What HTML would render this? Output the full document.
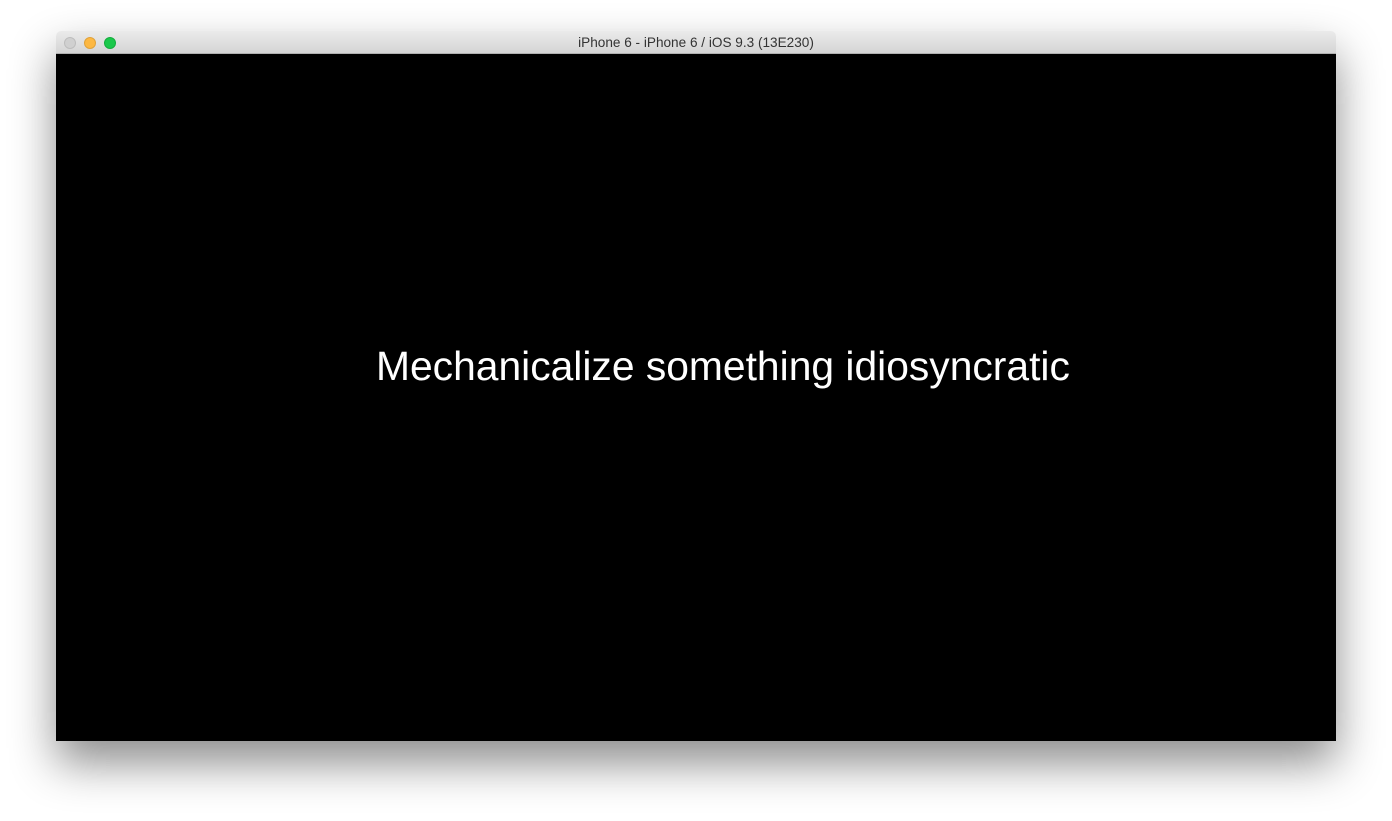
<!DOCTYPE html>
<html><head><style>
html,body{margin:0;padding:0;width:1392px;height:821px;background:#fff;overflow:hidden;font-family:"Liberation Sans",sans-serif}
.win{position:absolute;left:56px;top:31px;width:1280px;height:710px;box-shadow:0 22px 45px rgba(0,0,0,0.45);border-radius:5px 5px 0 0;overflow:hidden}
.tb{height:23px;background:linear-gradient(#ebebeb,#d5d5d5);border-bottom:1px solid #b0b0b0;position:relative;text-align:center;font-size:13.6px;line-height:24px;color:#333;box-sizing:border-box}
.d{position:absolute;top:6px;width:12px;height:12px;border-radius:50%;box-sizing:border-box}
.c{position:absolute;top:23px;left:0;right:0;bottom:0;background:#000}
.t{position:absolute;left:320px;top:288px;white-space:nowrap;color:#fff;font-size:40.8px;line-height:48px}
</style></head><body>
<div class="win">
<div class="tb">iPhone 6 - iPhone 6 / iOS 9.3 (13E230)
<div class="d" style="left:8px;background:#d0d0d0;border:1px solid #bdbdbd"></div>
<div class="d" style="left:28px;background:#fdb842;border:1px solid #e0a23a"></div>
<div class="d" style="left:48px;background:#1ac84b;border:1px solid #14ad3d"></div>
</div>
<div class="c"><div class="t">Mechanicalize something idiosyncratic</div></div>
</div>
</body></html>
